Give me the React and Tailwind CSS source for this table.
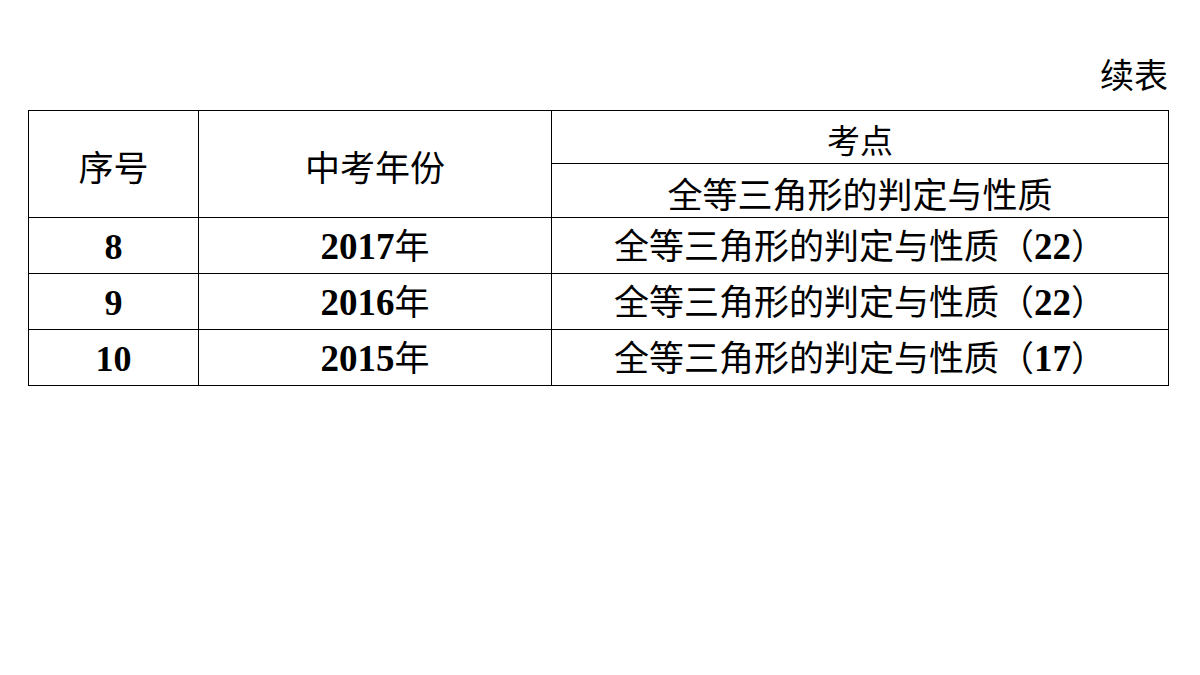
const rows = [
  { no: "8", year: "2017", point: "22" },
  { no: "9", year: "2016", point: "22" },
  { no: "10", year: "2015", point: "17" },
]

const cjk = { fontFamily: '"Liberation Serif", "Noto Sans CJK SC", serif' }

function App() {
  return (
    <div className="w-[1200px] h-[675px] bg-white text-black" style={cjk}>
      <div className="px-[28px] pt-[57px]">
        <div className="flex justify-end w-[1140px] h-[53px] text-[34px] leading-[40px]">续表</div>
        <table className="w-[1140px] border-collapse table-fixed border border-[#666]">
          <colgroup>
            <col className="w-[170px]" />
            <col className="w-[353px]" />
            <col className="w-[617px]" />
          </colgroup>
          <tbody>
            <tr className="h-[53px]">
              <td rowSpan={2} className="border border-black text-center text-[35px] leading-[50px] pt-[12px]">序号</td>
              <td rowSpan={2} className="border border-black text-center text-[35px] leading-[50px] pt-[12px]">中考年份</td>
              <td className="border border-black text-center text-[33px] leading-[36px] pt-[10px]">考点</td>
            </tr>
            <tr className="h-[54px]">
              <td className="border border-black text-center text-[35px] leading-[38px] pt-[12px]">全等三角形的判定与性质</td>
            </tr>
            {rows.map((r) => (
              <tr key={r.no} className="h-[56px]">
                <td className="border border-black text-center text-[36px] leading-[51px] font-bold pt-[4px]">{r.no}</td>
                <td className="border border-black text-center text-[35px] leading-[51px] pt-[4px]">
                  <span className="font-bold text-[37px] leading-none">{r.year}</span>年
                </td>
                <td className="border border-black text-center text-[35px] leading-[51px] pt-[4px]">
                  全等三角形的判定与性质（<span className="font-bold text-[37px] leading-none">{r.point}</span>）
                </td>
              </tr>
            ))}
          </tbody>
        </table>
      </div>
    </div>
  )
}

export default App
